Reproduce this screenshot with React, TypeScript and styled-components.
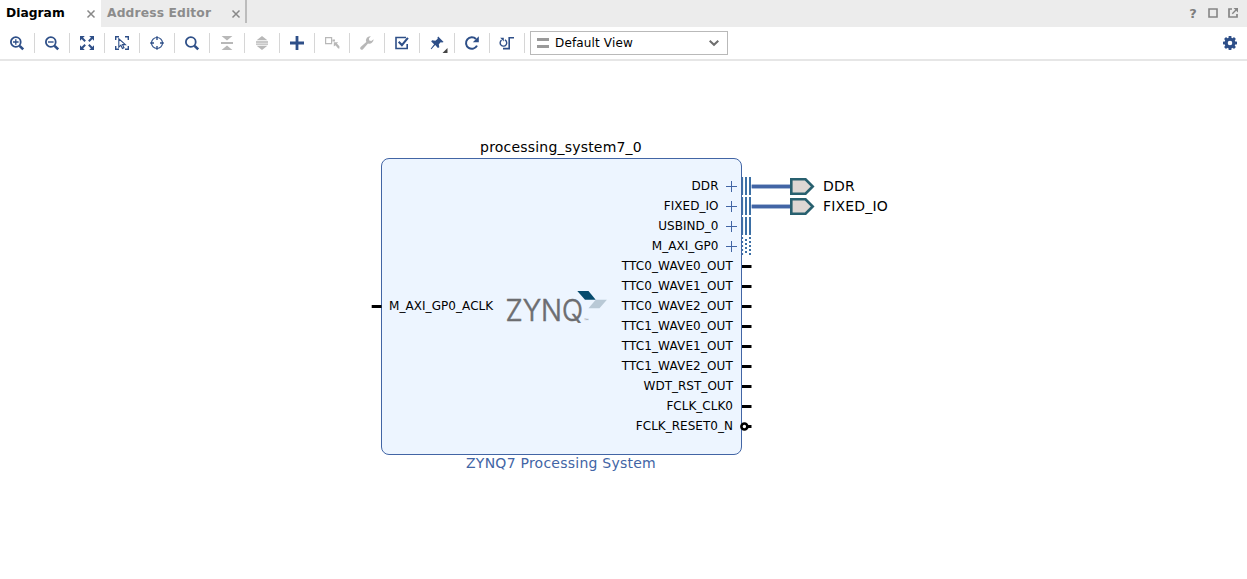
import React from "react";
import styled, { createGlobalStyle } from "styled-components";

const NAVY = "#2e4f88";
const DISABLED = "#b8b8b8";
const WIRE = "#4265a5";
const BUS = "#3b6fa5";

const GlobalStyle = createGlobalStyle`
  * { box-sizing: border-box; }
  body { margin: 0; background: #fff; font-family: "DejaVu Sans", sans-serif; color: #000; }
  svg { display: block; overflow: visible; }
`;

const Window = styled.div`
  display: flex;
  flex-direction: column;
  width: 1247px;
  height: 579px;
  overflow: hidden;
  background: #fff;
`;

const TabBar = styled.div`
  display: flex;
  height: 27px;
  background: #ececec;
`;

const Tab = styled.div<{ $active?: boolean; $width: number }>`
  display: flex;
  align-items: center;
  justify-content: space-between;
  width: ${(p) => p.$width}px;
  padding: 0 ${(p) => (p.$active ? 6 : 5)}px 2px 6px;
  background: ${(p) => (p.$active ? "#fff" : "transparent")};
  color: ${(p) => (p.$active ? "#000" : "#8c8c8c")};
  font-size: 12.3px;
  font-weight: bold;
  white-space: nowrap;
`;

const TabLabel = styled.span<{ $spacing: number }>`
  letter-spacing: ${(p) => p.$spacing}px;
`;

const CloseIcon = styled.svg`
  margin-top: 3px;
`;

const TabDivider = styled.div`
  width: 2px;
  height: 23px;
  background: #bcbcbc;
`;

const WindowControls = styled.div`
  display: flex;
  align-items: center;
  gap: 10px;
  margin-left: auto;
  padding: 0 9px 1px 0;
`;

const Help = styled.span`
  width: 10px;
  color: #7d7d7d;
  font-size: 13px;
  font-weight: bold;
  text-align: center;
`;

const Toolbar = styled.div`
  display: flex;
  align-items: center;
  height: 34px;
  border-bottom: 2px solid #e6e6e6;
  background: #fff;
`;

const ToolButton = styled.div`
  display: flex;
  align-items: center;
  justify-content: center;
  width: 35px;
  height: 20px;
  border-right: 1px solid #d6d6d6;
`;

const ViewSelect = styled.div`
  display: flex;
  align-items: center;
  width: 198px;
  height: 24px;
  margin-left: 5px;
  padding: 0 8px 0 6px;
  border: 1px solid #b9b9b9;
  font-size: 12px;
`;

const SelectText = styled.span`
  flex: 1;
  margin-left: 6px;
  padding-bottom: 1px;
  letter-spacing: 0.15px;
`;

const Settings = styled.div`
  margin-left: auto;
  margin-right: 9px;
`;

const Canvas = styled.div`
  position: relative;
  flex: 1;
`;

const Block = styled.div`
  position: absolute;
  left: 381px;
  top: 97px;
  display: flex;
  align-items: center;
  width: 361px;
  height: 297px;
  padding-bottom: 1px;
  border: 1px solid ${WIRE};
  border-radius: 8px;
  background: #edf5ff;
`;

const Caption = styled.div<{ $top: number; $color: string; $spacing: number }>`
  position: absolute;
  left: 381px;
  top: ${(p) => p.$top}px;
  width: 360px;
  color: ${(p) => p.$color};
  font-size: 14px;
  line-height: 18px;
  letter-spacing: ${(p) => p.$spacing}px;
  text-align: center;
`;

const Inputs = styled.div`
  display: flex;
  align-items: center;
  gap: 7px;
  width: 134px;
  margin-left: -10px;
`;

const PortLabel = styled.span<{ $spacing?: number }>`
  font-size: 12px;
  line-height: 20px;
  letter-spacing: ${(p) => p.$spacing ?? 0.06}px;
  white-space: nowrap;
`;

const Outputs = styled.div`
  display: flex;
  flex-direction: column;
  align-self: flex-start;
  margin: 17px -10px 0 auto;
`;

const OutputRow = styled.div`
  display: flex;
  align-items: center;
  justify-content: flex-end;
  height: 20px;
`;

const Pin = styled.svg<{ $gap: number }>`
  margin-left: ${(p) => p.$gap}px;
`;

const External = styled.div<{ $top: number }>`
  position: absolute;
  left: 751px;
  top: ${(p) => p.$top}px;
  display: flex;
  align-items: center;
  gap: 8px;
  height: 20px;
  font-size: 14px;
  letter-spacing: 0.18px;
`;

const magnifier = (
  <>
    <circle cx="6.8" cy="7" r="4.9" fill="none" stroke={NAVY} strokeWidth="1.8" />
    <path d="M10.6 10.8L14.2 14.4" stroke={NAVY} strokeWidth="2.6" />
  </>
);

const tools: [string, React.ReactNode][] = [
  ["zoom-in", <>{magnifier}<path d="M4 7h5.6M6.8 4.2v5.6" stroke={NAVY} strokeWidth="1.3" /></>],
  ["zoom-out", <>{magnifier}<path d="M4 7h5.6" stroke={NAVY} strokeWidth="1.4" /></>],
  ["fit", <>
    <path d="M1 1h4.8L1 5.8zM15 1v4.8L10.2 1zM1 15v-4.8L5.8 15zM15 15h-4.8L15 10.2z" fill={NAVY} />
    <path d="M2.5 2.5L6.2 6.2M13.5 2.5L9.8 6.2M2.5 13.5L6.2 9.8M13.5 13.5L9.8 9.8" stroke={NAVY} strokeWidth="2" />
  </>],
  ["select-area", <>
    <path d="M1.7 5V1.7H5M11 1.7h3.3V5M14.3 11v3.3H11M5 14.3H1.7V11" fill="none" stroke={NAVY} strokeWidth="1.4" />
    <path d="M4.8 3.8v8.4l2.1-2 1.5 3.3 1.6-.8-1.5-3.1h2.9z" fill="#fff" stroke={NAVY} strokeWidth="1.1" />
  </>],
  ["center", <>
    <circle cx="8" cy="8" r="5.5" fill="none" stroke={NAVY} strokeWidth="1.2" />
    <path d="M8 1.2v3.8M8 11v3.8M1.2 8h3.8M11 8h3.8" stroke={NAVY} strokeWidth="1.4" />
  </>],
  ["search", magnifier],
  ["collapse", <>
    <path d="M2.600 1h10.800L8 5.600zM2.600 15h10.800L8 10.400z" fill={DISABLED} />
    <path d="M2 8h12" stroke={DISABLED} strokeWidth="2" />
  </>],
  ["expand", <>
    <path d="M2.600 5.200h10.800L8 1zM2.600 10.800h10.800L8 15z" fill={DISABLED} />
    <path d="M2 7h12M2 9.200h12" stroke={DISABLED} strokeWidth="1.300" />
  </>],
  ["add", <path d="M8 1v14M1 8h14" stroke={NAVY} strokeWidth="2.8" />],
  ["make-external", <>
    <path d="M1.6 2.6h6v6h-6z" fill="none" stroke={DISABLED} strokeWidth="1.2" />
    <path d="M8.400 4.400h2.600v2H8.400zM9.800 7.200h4.400l-1.300 1.400 2.500 2.600v2.200h-1.200l-2.700-3.200-1.700 1.400z" fill={DISABLED} />
  </>],
  ["wrench", <path d="M14.6 4.2a4.2 4.2 0 0 1-5.600 4.200L4 14.200a1.600 1.600 0 0 1-2.400-2.300L7.300 7A4.200 4.200 0 0 1 11.800 1.200L9.900 3.500l.4 2 2 .4z" fill={DISABLED} />],
  ["validate", <>
    <path d="M12 2.5H2v11h11.2V9" fill="none" stroke={NAVY} strokeWidth="1.6" />
    <path d="M4.7 6.8l3.2 3.3 6-7.3" fill="none" stroke={NAVY} strokeWidth="2.1" />
  </>],
  ["pin", <>
    <path d="M9.2 1.6l5.4 5.4-1.5.5-1.4-.3-1.9 2 .5 3-1.4.7L6.2 10 2.4 14.2l-.7-.5L5.1 9.2 2.2 6.5l.9-1.2 3.3.4 2.3-1.9-.2-1.4z" fill={NAVY} />
    <path d="M18.5 13V18h-5z" fill="#444" />
  </>],
  ["reload", <>
    <path d="M13 10.6A5.8 5.8 0 1 1 12 4" fill="none" stroke={NAVY} strokeWidth="2" />
    <path d="M14.8 1.2v6H8.8z" fill={NAVY} />
  </>],
  ["regenerate", <>
    <path d="M5.9 4.9A3.3 3.3 0 1 1 2.6 5.1" fill="none" stroke={NAVY} strokeWidth="1.4" />
    <path d="M1.2 2.8h3.6v3.6z" fill={NAVY} />
    <path d="M4 13.6h6.2V2.7h4.8" fill="none" stroke={NAVY} strokeWidth="1.6" />
  </>],
];

const Close = () => (
  <CloseIcon width="8" height="8" viewBox="0 0 8 8">
    <path d="M.5.5l7 7M7.5.5l-7 7" stroke="#888" strokeWidth="1.5" />
  </CloseIcon>
);

const outputs: [string, "bus" | "dashed" | "line" | "inverted"][] = [
  ["DDR", "bus"],
  ["FIXED_IO", "bus"],
  ["USBIND_0", "bus"],
  ["M_AXI_GP0", "dashed"],
  ["TTC0_WAVE0_OUT", "line"],
  ["TTC0_WAVE1_OUT", "line"],
  ["TTC0_WAVE2_OUT", "line"],
  ["TTC1_WAVE0_OUT", "line"],
  ["TTC1_WAVE1_OUT", "line"],
  ["TTC1_WAVE2_OUT", "line"],
  ["WDT_RST_OUT", "line"],
  ["FCLK_CLK0", "line"],
  ["FCLK_RESET0_N", "inverted"],
];

function OutputPin({ kind }: { kind: string }) {
  if (kind === "bus" || kind === "dashed") {
    const dash = kind === "dashed" ? "2 2" : undefined;
    return (
      <Pin $gap={7.5} width="25" height="20" viewBox="0 0 25 20">
        <path d="M0 10.5h11M5.5 5v11" stroke={WIRE} strokeWidth="1" />
        <path d="M16.5 1v18" stroke={BUS} strokeWidth="1.2" strokeDasharray={dash} />
        <path d="M20 1v18" stroke={BUS} strokeWidth="2" strokeDasharray={dash} strokeDashoffset={dash ? 2 : 0} />
        <path d="M24 1v18" stroke={BUS} strokeWidth="2" strokeDasharray={dash} />
      </Pin>
    );
  }
  return (
    <Pin $gap={8} width="10" height="20" viewBox="0 0 10 20">
      {kind === "line" ? (
        <path d="M1 10.5h9.5" stroke="#000" strokeWidth="3" />
      ) : (
        <>
          <path d="M5 10.5h5.5" stroke="#000" strokeWidth="3" />
          <circle cx="3.4" cy="10.5" r="3" fill="#fff" stroke="#000" strokeWidth="2.6" />
        </>
      )}
    </Pin>
  );
}

const ExternalPort = ({ name, top }: { name: string; top: number }) => (
  <External $top={top}>
    <svg width="64" height="20" viewBox="0 0 64 20">
      <path d="M.7 10.5H40" stroke="#a9bbd8" strokeWidth="5" />
      <path d="M.7 10.5H40" stroke={WIRE} strokeWidth="3" />
      <path d="M40.3 3.3h14.2l7.2 7.2-7.2 7.2H40.3z" fill="#ded7d3" stroke="#28606f" strokeWidth="2.6" />
    </svg>
    <span>{name}</span>
  </External>
);

export default function App() {
  return (
    <Window>
      <GlobalStyle />
      <TabBar>
        <Tab $active $width={101}><TabLabel $spacing={0}>Diagram</TabLabel><Close /></Tab>
        <Tab $width={144}><TabLabel $spacing={0.13}>Address Editor</TabLabel><Close /></Tab>
        <TabDivider />
        <WindowControls>
          <Help>?</Help>
          <svg width="10" height="10" viewBox="0 0 10 10">
            <path d="M1 1h8v8H1z" fill="none" stroke="#858585" strokeWidth="1.6" />
          </svg>
          <svg width="10" height="10" viewBox="0 0 10 10">
            <path d="M4 1H1v8h8V6" fill="none" stroke="#858585" strokeWidth="1.7" />
            <path d="M4.3 5.7L8 2" stroke="#858585" strokeWidth="1.4" />
            <path d="M5.5 0H10v4.5z" fill="#858585" />
          </svg>
        </WindowControls>
      </TabBar>
      <Toolbar>
        {tools.map(([name, art]) => (
          <ToolButton key={name}>
            <svg width="16" height="16" viewBox="0 0 16 16">{art}</svg>
          </ToolButton>
        ))}
        <ViewSelect>
          <svg width="12" height="10" viewBox="0 0 12 10">
            <path d="M0 1.5h12M0 8.5h12" stroke="#9a9a9a" strokeWidth="3" />
          </svg>
          <SelectText>Default View</SelectText>
          <svg width="10" height="6" viewBox="0 0 10 6">
            <path d="M.7.7L5 4.8 9.3.7" fill="none" stroke="#6e6e6e" strokeWidth="2" />
          </svg>
        </ViewSelect>
        <Settings>
          <svg width="16" height="16" viewBox="-8 -8 16 16">
            <circle r="3.9" fill="none" stroke={NAVY} strokeWidth="3.2" />
            {[0, 45, 90, 135, 180, 225, 270, 315].map((a) => (
              <path key={a} d="M-1.4-7h2.8v2.4h-2.8z" fill={NAVY} transform={`rotate(${a})`} />
            ))}
          </svg>
        </Settings>
      </Toolbar>
      <Canvas>
        <Caption $top={77} $color="#000" $spacing={0.2}>processing_system7_0</Caption>
        <Block>
          <Inputs>
            <svg width="10" height="20" viewBox="0 0 10 20">
              <path d="M-.3 10.5H9.5" stroke="#000" strokeWidth="3" />
            </svg>
            <PortLabel>M_AXI_GP0_ACLK</PortLabel>
          </Inputs>
          <svg width="101" height="34" viewBox="0 0 101 34">
            <text x="-.5" y="32" fill="#6c6d70" stroke="#6c6d70" strokeWidth=".6" fontFamily="Inter"
              fontSize="30" fontWeight="300" textLength="77.5" lengthAdjust="spacingAndGlyphs">ZYNQ</text>
            <text x="77.5" y="34" fill="#6c6d70" fontFamily="DejaVu Sans" fontSize="6">™</text>
            <path d="M71.3 2h11.2l7.2 8.7H79z" fill="#064b6e" />
            <path d="M89.7 10.7h11.2L93.5 19.3H82.5z" fill="#b9c9d6" />
          </svg>
          <Outputs>
            {outputs.map(([name, kind]) => (
              <OutputRow key={name}>
                <PortLabel $spacing={name.startsWith("TTC") ? 0.14 : 0.02}>{name}</PortLabel>
                <OutputPin kind={kind} />
              </OutputRow>
            ))}
          </Outputs>
        </Block>
        <Caption $top={393} $color={WIRE} $spacing={0.24}>ZYNQ7 Processing System</Caption>
        <ExternalPort name="DDR" top={115} />
        <ExternalPort name="FIXED_IO" top={135} />
      </Canvas>
    </Window>
  );
}
